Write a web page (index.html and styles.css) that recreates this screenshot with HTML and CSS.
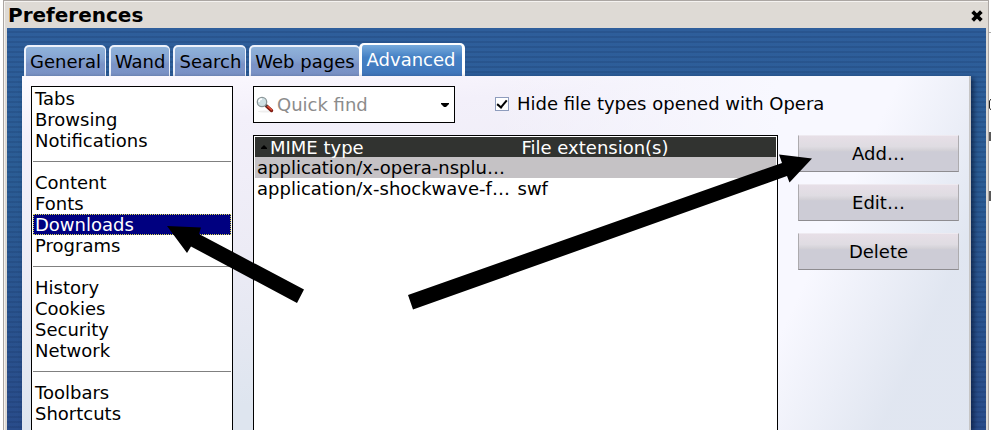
FILE: index.html
```
<!DOCTYPE html>
<html lang="en">
<head>
  <meta charset="UTF-8">
  <title>Preferences</title>
  <link rel="stylesheet" href="styles.css">
</head>
<body>

<div class="window">
  <div class="titlebar">
    <h1>Preferences</h1>
    <button class="close" aria-label="Close">
      <svg width="12" height="12" viewBox="0 0 12 12"><path d="M3 3 L9 9 M9 3 L3 9" stroke="#000" stroke-width="3.8" stroke-linecap="square"/></svg>
    </button>
  </div>

  <div class="content">
    <div class="tabs">
      <button class="tab">General</button>
      <button class="tab">Wand</button>
      <button class="tab">Search</button>
      <button class="tab">Web pages</button>
      <button class="tab active">Advanced</button>
    </div>

    <div class="panel">
      <ul class="sidebar">
        <li><a href="#tabs">Tabs</a></li>
        <li><a href="#browsing">Browsing</a></li>
        <li><a href="#notifications">Notifications</a></li>
        <li class="separator"></li>
        <li><a href="#content">Content</a></li>
        <li><a href="#fonts">Fonts</a></li>
        <li><a href="#downloads" class="selected">Downloads</a></li>
        <li><a href="#programs">Programs</a></li>
        <li class="separator"></li>
        <li><a href="#history">History</a></li>
        <li><a href="#cookies">Cookies</a></li>
        <li><a href="#security">Security</a></li>
        <li><a href="#network">Network</a></li>
        <li class="separator"></li>
        <li><a href="#toolbars">Toolbars</a></li>
        <li><a href="#shortcuts">Shortcuts</a></li>
      </ul>

      <div class="main">
        <div class="filters">
          <div class="quickfind">
            <svg width="18" height="18" viewBox="0 0 18 18">
              <ellipse cx="9" cy="15.5" rx="7" ry="1" fill="#eee"/>
              <path d="M10.5 10 L15.5 14.5" stroke="#7c1a10" stroke-width="3.4" stroke-linecap="round"/>
              <path d="M11.5 10.3 L15.5 13.8" stroke="#e8503a" stroke-width="1.5" stroke-linecap="round"/>
              <path d="M9 8.5 L11 10.5" stroke="#444" stroke-width="2"/>
              <circle cx="6" cy="6" r="4.7" fill="#cfe0e4" stroke="#8c9799" stroke-width="1.3"/>
              <path d="M3 6 A3 3 0 0 1 6 3" stroke="#fff" stroke-width="1.6" fill="none"/>
            </svg>
            <input type="text" placeholder="Quick find" aria-label="Quick find">
            <button class="dropdown" aria-label="Show recent searches">
              <svg width="8" height="4" viewBox="0 0 8 4"><path d="M0 0 H8 V1 L5 4 H3 L0 1 Z"/></svg>
            </button>
          </div>
          <label class="hide-types"><input type="checkbox" checked> Hide file types opened with Opera</label>
        </div>

        <div class="row">
          <div class="types">
            <table>
              <thead>
                <tr>
                  <th class="mime"><svg class="sort" width="6" height="4" viewBox="0 0 6 4"><path d="M0 4 V3 L3 0 L6 3 V4 Z"/></svg>MIME type</th>
                  <th>File extension(s)</th>
                </tr>
              </thead>
              <tbody>
                <tr class="current"><td>application/x-opera-nsplu…</td><td></td></tr>
                <tr><td>application/x-shockwave-f…</td><td>swf</td></tr>
              </tbody>
            </table>
          </div>

          <div class="actions">
            <button>Add…</button>
            <button>Edit…</button>
            <button>Delete</button>
          </div>
        </div>
      </div>
    </div>
  </div>
</div>

<!-- sliver of the page behind the window -->
<div class="behind">
  <svg width="2" height="210" viewBox="0 0 2 210">
    <path d="M0 32.5 H2" stroke="#aaa"/>
    <path d="M2 99 L0.5 101 V108 L2 110" stroke="#222" fill="none"/>
    <path d="M1 132 V141 M1 191 V201" stroke="#222" stroke-width="1.5"/>
  </svg>
</div>

<svg class="arrows" width="991" height="430" viewBox="0 0 991 430">
  <path d="M167 226 L201 227.500 L199 234 L304 289.500 L297 303 L191 246.500 L187 253 Z"/>
  <path d="M812 158.500 L779 154.500 L782 163 L408 295 L413 309.500 L787 176 L789.500 182.500 Z"/>
</svg>

</body>
</html>
```
FILE: styles.css
```
* {
  box-sizing: border-box;
}
body {
  display: flex;
  position: relative;
  min-height: 100vh;
  margin: 0;
  padding-left: 3px;
  background: #fff;
  color: #000;
  font-family: "DejaVu Sans", sans-serif;
  font-size: 18px;
  line-height: 21px;
}
button,
input {
  margin: 0;
  padding: 0;
  border: 0;
  background: none;
  color: inherit;
  font: inherit;
}

.window {
  display: flex;
  flex: 1;
  flex-direction: column;
  border: 1px solid #aba6a3;
  border-bottom: 0;
  background: #dedad5;
  box-shadow: inset 1px 1px #f4f2f0;
}
.titlebar {
  display: flex;
  align-items: center;
  justify-content: space-between;
  height: 27px;
  padding: 1px 5px 0 4px;
}
h1 {
  margin: 0;
  font-size: 20px;
  font-weight: bold;
}
.close {
  display: flex;
  padding-top: 2px;
}

.content {
  display: flex;
  flex: 1;
  flex-direction: column;
  margin: 0 2px 0 3px;
  padding: 15px 15px 0;
  background:
    repeating-linear-gradient(rgba(10, 30, 70, 0) 0 3px, rgba(10, 30, 70, 0.14) 3px 5px),
    linear-gradient(#2e5e9b, #2b5d95 35%, #294c8a);
}
.tabs {
  display: flex;
  align-items: flex-end;
  gap: 3px;
  height: 33px;
  padding-left: 2px;
}
.tab {
  height: 31px;
  padding: 0 4px;
  border: 1px solid #eef2fb;
  border-width: 2px 1px 0 2px;
  border-radius: 5px 5px 0 0;
  background: linear-gradient(#8fb3da, #86a4d2 40%, #7a92c6 60%, #7b93c7);
}
.tab.active {
  height: 33px;
  margin-left: -4px;
  padding: 0 6px 2px 5px;
  border-width: 2px 3px 0;
  border-color: #fff;
  background: linear-gradient(#78abdc, #4480c4 40%, #4076bb);
  color: #fff;
}

.panel {
  display: flex;
  flex: 1;
  gap: 20px;
  padding: 10px 10px 0 9px;
  border-right: 2px solid #c6c5c5;
  background:
    linear-gradient(115deg, rgba(222, 228, 239, 0) 79%, rgba(222, 228, 239, 0.9) 92%),
    linear-gradient(90deg, rgba(248, 249, 255, 0) 50%, #f8f8ff 80%),
    linear-gradient(175deg, #fdfaff 0, #f3f0fa 14%, #ecebf5 45%, #dee5ef 80%);
  box-shadow: 3px 2px 5px rgba(0, 15, 45, 0.6);
}

.sidebar {
  width: 202px;
  margin: 0;
  padding: 1px;
  border: 1px solid #000;
  border-bottom: 0;
  background: #fff;
  list-style: none;
}
.sidebar li {
  height: 21px;
}
.sidebar a {
  display: block;
  height: 21px;
  padding-left: 2px;
  color: #000;
  text-decoration: none;
}
.sidebar .selected {
  padding-left: 1px;
  border: 1px dotted #d8d850;
  background: #000080;
  color: #fff;
  line-height: 19px;
}
.separator::before {
  display: block;
  height: 10px;
  border-bottom: 1px solid #808080;
  content: "";
}

.main {
  display: flex;
  flex: 1;
  flex-direction: column;
  gap: 12px;
}
.filters {
  display: flex;
  gap: 40px;
}
.quickfind {
  display: flex;
  flex: none;
  align-items: center;
  width: 202px;
  height: 37px;
  padding: 0 5px 0 2px;
  border: 1px solid #000;
  background: #fff;
}
.quickfind input {
  flex: 1;
  min-width: 0;
  padding-left: 3px;
}
.quickfind input::placeholder {
  color: #8c8c8c;
}
.dropdown,
.quickfind svg {
  display: block;
}
.hide-types {
  display: flex;
  align-items: center;
  gap: 8px;
  height: 35px;
  white-space: nowrap;
}
.hide-types input {
  flex: none;
  width: 14px;
  height: 14px;
  border: 1px solid #8e9cbd;
  background: #fff;
  appearance: none;
}
.hide-types input:checked::before {
  display: block;
  width: 4px;
  height: 8px;
  margin: 0 0 0 3px;
  border: solid #000;
  border-width: 0 2px 2px 0;
  transform: rotate(40deg);
  content: "";
}

.row {
  display: flex;
  flex: 1;
  gap: 20px;
}
.types {
  flex: 1;
  padding: 1px;
  border: 1px solid #000;
  border-bottom: 0;
  background: #fff;
}
table {
  width: 100%;
  border-collapse: collapse;
  table-layout: fixed;
}
th,
td {
  padding: 0 2px;
  text-align: left;
  white-space: nowrap;
}
th {
  height: 20px;
  padding: 1px 0 0 6px;
  background: #313330;
  color: #fff;
  font-weight: normal;
  line-height: 19px;
}
.mime {
  width: 50%;
}
.sort {
  margin-right: 3px;
  vertical-align: 5px;
}
.current {
  background: #c5c2c5;
}

.actions {
  display: flex;
  flex-direction: column;
  gap: 12px;
  width: 161px;
}
.actions button {
  height: 37px;
  border: 1px solid #adabae;
  border-top-color: #eeeaf0;
  border-bottom-color: #8e8c90;
  background: linear-gradient(#e7dfe7, #dfdce2 30%, #d2d0d6 42%, #cdccd6 45%);
}

.behind {
  width: 2px;
}
.behind svg {
  display: block;
}

.arrows {
  position: absolute;
  top: 0;
  left: 0;
  pointer-events: none;
}
```
